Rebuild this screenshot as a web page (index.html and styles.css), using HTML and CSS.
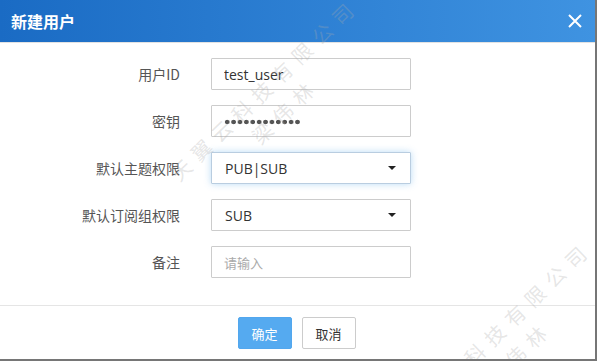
FILE: index.html
```html
<!DOCTYPE html>
<html lang="zh-CN">

<head>
    <meta charset="UTF-8">
    <meta name="viewport" content="width=device-width, initial-scale=1.0">
    <title>新建用户</title>
    <link rel="stylesheet" href="styles.css">
</head>

<body>
    <div class="dialog">
        <div class="dialog-header">
            <span class="dialog-title">新建用户</span>
            <span class="close" title="关闭">
                <svg width="16" height="16" viewBox="0 0 16 16">
                    <path d="M2 2 L14 14 M14 2 L2 14" stroke="#fff" stroke-width="2" fill="none" />
                </svg>
            </span>
        </div>

        <div class="dialog-body">
            <div class="form">
                <label class="label">用户ID</label>
                <input class="field" type="text" value="test_user">

                <label class="label">密钥</label>
                <div class="field password" aria-label="密钥"><span class="dots"></span></div>

                <label class="label">默认主题权限</label>
                <div class="field select focus"><span>PUB|SUB</span></div>

                <label class="label">默认订阅组权限</label>
                <div class="field select"><span>SUB</span></div>

                <label class="label">备注</label>
                <input class="field" type="text" placeholder="请输入">
            </div>
        </div>

        <div class="dialog-footer">
            <button class="btn btn-primary">确定</button>
            <button class="btn">取消</button>
        </div>

        <!-- watermark tiles -->
        <div class="watermark wm-1">天翼云科技有限公司<br>梁伟林</div>
        <div class="watermark wm-2">天翼云科技有限公司<br>梁伟林</div>
    </div>
</body>

</html>
```

FILE: styles.css
```css
* {
    box-sizing: border-box;
    font-family: "Open Sans", "Noto Sans CJK SC", sans-serif;
}

body {
    margin: 0;
    width: 597px;
    height: 361px;
    background-color: #767676;
    overflow: hidden;
}

.dialog {
    position: relative;
    width: 595px;
    height: 359px;
    background-color: #fff;
    overflow: hidden;
}

.dialog-header {
    display: flex;
    align-items: center;
    justify-content: space-between;
    height: 43px;
    padding: 0 11px 1px 11px;
    background: linear-gradient(90deg, #1a6bc4, #3f93e1);
    border-bottom: 1px solid #e2e2e2;
}

.dialog-title {
    color: #fff;
    font-size: 16px;
    font-weight: bold;
    font-family: "Noto Sans CJK SC", sans-serif;
}

.close {
    display: flex;
    margin-right: 1px;
}

.dialog-body {
    padding: 15px 0 27px 0;
    border-bottom: 1px solid #e5e5e5;
}

.form {
    display: grid;
    grid-template-columns: 180px 200px;
    grid-auto-rows: 32px;
    column-gap: 31px;
    row-gap: 15px;
    align-items: center;
}

.label {
    text-align: right;
    font-size: 14px;
    color: #555;
    font-family: "Noto Sans CJK SC", sans-serif;
}

.field {
    display: flex;
    align-items: center;
    width: 200px;
    height: 32px;
    margin: 0;
    padding: 0 12px;
    border: 1px solid #ccc;
    border-radius: 1px;
    background-color: #fff;
    font-size: 14px;
    color: #333;
    outline: none;
}

.field::placeholder {
    color: #aaa;
    font-size: 13px;
    font-family: "Noto Sans CJK SC", sans-serif;
}

.dots {
    width: 77px;
    height: 6px;
    margin-top: 1px;
    background: radial-gradient(circle, #555 2px, transparent 2.6px) 0 0 / 6.4px 6px repeat-x;
}

.select {
    justify-content: space-between;
    padding-left: 13px;
}

.select::after {
    content: "";
    border-left: 4px solid transparent;
    border-right: 4px solid transparent;
    border-top: 4px solid #222;
    margin-right: 2px;
}

.focus {
    border-color: #b9cde0;
    box-shadow: 0 0 7px rgba(102, 175, 233, .45);
}

.dialog-footer {
    display: flex;
    justify-content: center;
    gap: 10px;
    padding-top: 11px;
    padding-right: 2px;
}

.btn {
    width: 54px;
    height: 32px;
    padding: 0;
    border: 1px solid #ccc;
    border-radius: 2px;
    background-color: #fff;
    color: #333;
    font-size: 13px;
    font-family: "Noto Sans CJK SC", sans-serif;
}

.btn-primary {
    border-color: #52a7ee;
    background-color: #55aaf0;
    color: #fff;
}

.watermark {
    position: absolute;
    transform: translate(-50%, -50%) rotate(-44deg);
    text-align: center;
    white-space: nowrap;
    font-family: "Noto Sans CJK SC", sans-serif;
    font-size: 20px;
    line-height: 30px;
    letter-spacing: 8px;
    color: rgba(170, 170, 170, .3);
    pointer-events: none;
}

.wm-1 {
    left: 275px;
    top: 100px;
}

.wm-2 {
    left: 508px;
    top: 343px;
}
```
